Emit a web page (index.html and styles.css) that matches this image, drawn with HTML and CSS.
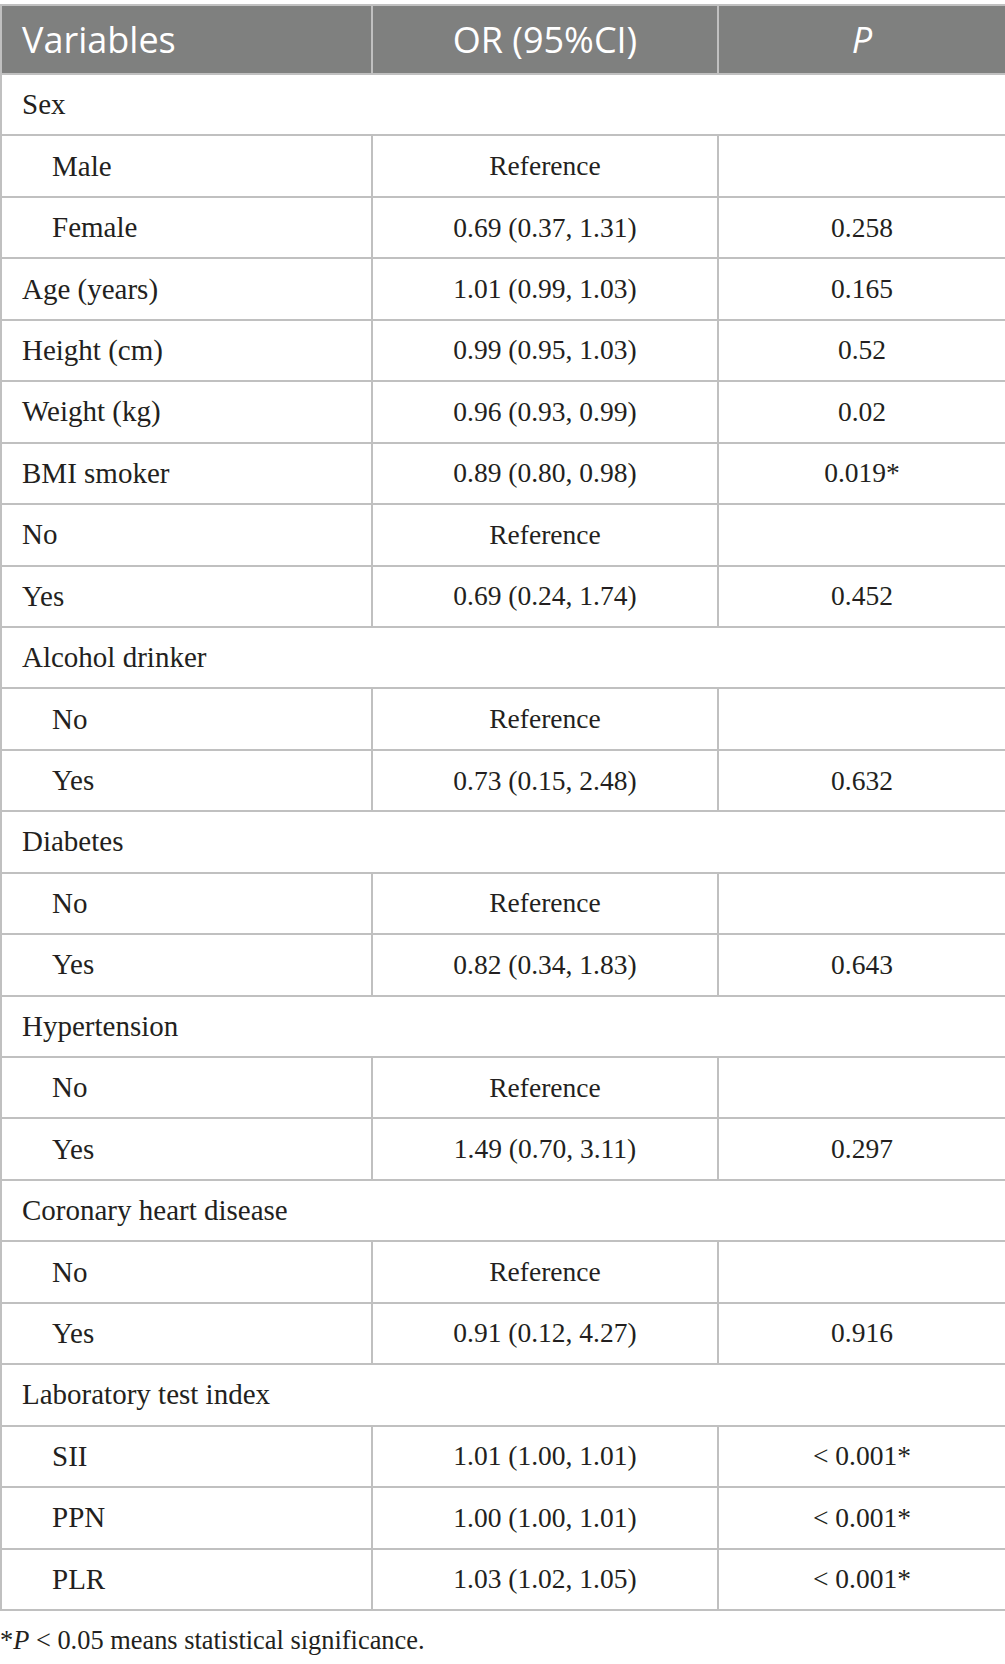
FILE: index.html
```html
<!DOCTYPE html>
<html>
<head>
<meta charset="utf-8">
<link rel="stylesheet" href="styles.css">
</head>
<body>
<div class="wrap">
<table class="or-table">
  <colgroup>
    <col class="c1"><col class="c2"><col class="c3">
  </colgroup>
  <thead>
    <tr><th class="left">Variables</th><th>OR (95%CI)</th><th><i>P</i></th></tr>
  </thead>
  <tbody>
    <tr><td colspan="3" class="grp">Sex</td></tr>
    <tr><td class="sub">Male</td><td>Reference</td><td></td></tr>
    <tr><td class="sub">Female</td><td>0.69 (0.37, 1.31)</td><td>0.258</td></tr>
    <tr><td class="grp">Age (years)</td><td>1.01 (0.99, 1.03)</td><td>0.165</td></tr>
    <tr><td class="grp">Height (cm)</td><td>0.99 (0.95, 1.03)</td><td>0.52</td></tr>
    <tr><td class="grp">Weight (kg)</td><td>0.96 (0.93, 0.99)</td><td>0.02</td></tr>
    <tr><td class="grp">BMI smoker</td><td>0.89 (0.80, 0.98)</td><td>0.019*</td></tr>
    <tr><td class="grp">No</td><td>Reference</td><td></td></tr>
    <tr><td class="grp">Yes</td><td>0.69 (0.24, 1.74)</td><td>0.452</td></tr>
    <tr><td colspan="3" class="grp">Alcohol drinker</td></tr>
    <tr><td class="sub">No</td><td>Reference</td><td></td></tr>
    <tr><td class="sub">Yes</td><td>0.73 (0.15, 2.48)</td><td>0.632</td></tr>
    <tr><td colspan="3" class="grp">Diabetes</td></tr>
    <tr><td class="sub">No</td><td>Reference</td><td></td></tr>
    <tr><td class="sub">Yes</td><td>0.82 (0.34, 1.83)</td><td>0.643</td></tr>
    <tr><td colspan="3" class="grp">Hypertension</td></tr>
    <tr><td class="sub">No</td><td>Reference</td><td></td></tr>
    <tr><td class="sub">Yes</td><td>1.49 (0.70, 3.11)</td><td>0.297</td></tr>
    <tr><td colspan="3" class="grp">Coronary heart disease</td></tr>
    <tr><td class="sub">No</td><td>Reference</td><td></td></tr>
    <tr><td class="sub">Yes</td><td>0.91 (0.12, 4.27)</td><td>0.916</td></tr>
    <tr><td colspan="3" class="grp">Laboratory test index</td></tr>
    <tr><td class="sub">SII</td><td>1.01 (1.00, 1.01)</td><td>&lt; 0.001*</td></tr>
    <tr><td class="sub">PPN</td><td>1.00 (1.00, 1.01)</td><td>&lt; 0.001*</td></tr>
    <tr><td class="sub">PLR</td><td>1.03 (1.02, 1.05)</td><td>&lt; 0.001*</td></tr>
  </tbody>
</table>
<p class="note">*<i>P</i> &lt; 0.05 means statistical significance.</p>
</div>
</body>
</html>
```

FILE: styles.css
```css
html, body {
  margin: 0;
  padding: 0;
  background: #ffffff;
}

.wrap {
  padding-top: 4px;
  width: 1005px;
}

.or-table {
  width: 1005px;
  border-collapse: collapse;
  table-layout: fixed;
  font-family: "Liberation Serif", "Times New Roman", serif;
  font-size: 27.5px;
  color: #231f20;
}

.c1 { width: 371px; }
.c2 { width: 346px; }
.c3 { width: 288px; }

.or-table th {
  background: #7f807f;
  color: #ffffff;
  font-family: "Open Sans", "Noto Sans", sans-serif;
  font-weight: 400;
  font-size: 36px;
  height: 67px;
  padding: 0;
  border: 2px solid #c0c0c0;
  text-align: center;
  vertical-align: middle;
}

.or-table th.left {
  text-align: left;
  padding-left: 20px;
}

.or-table td {
  height: 59.45px;
  padding: 0;
  border: 2px solid #c0c0c0;
  text-align: center;
  vertical-align: middle;
}

.or-table td.grp {
  text-align: left;
  padding-left: 20px;
  font-size: 29px;
}

.or-table td.sub {
  text-align: left;
  padding-left: 50px;
  font-size: 29px;
}

.note {
  margin: 14px 0 0 0;
  font-family: "Liberation Serif", "Times New Roman", serif;
  font-size: 26.4px;
  color: #231f20;
}
```
